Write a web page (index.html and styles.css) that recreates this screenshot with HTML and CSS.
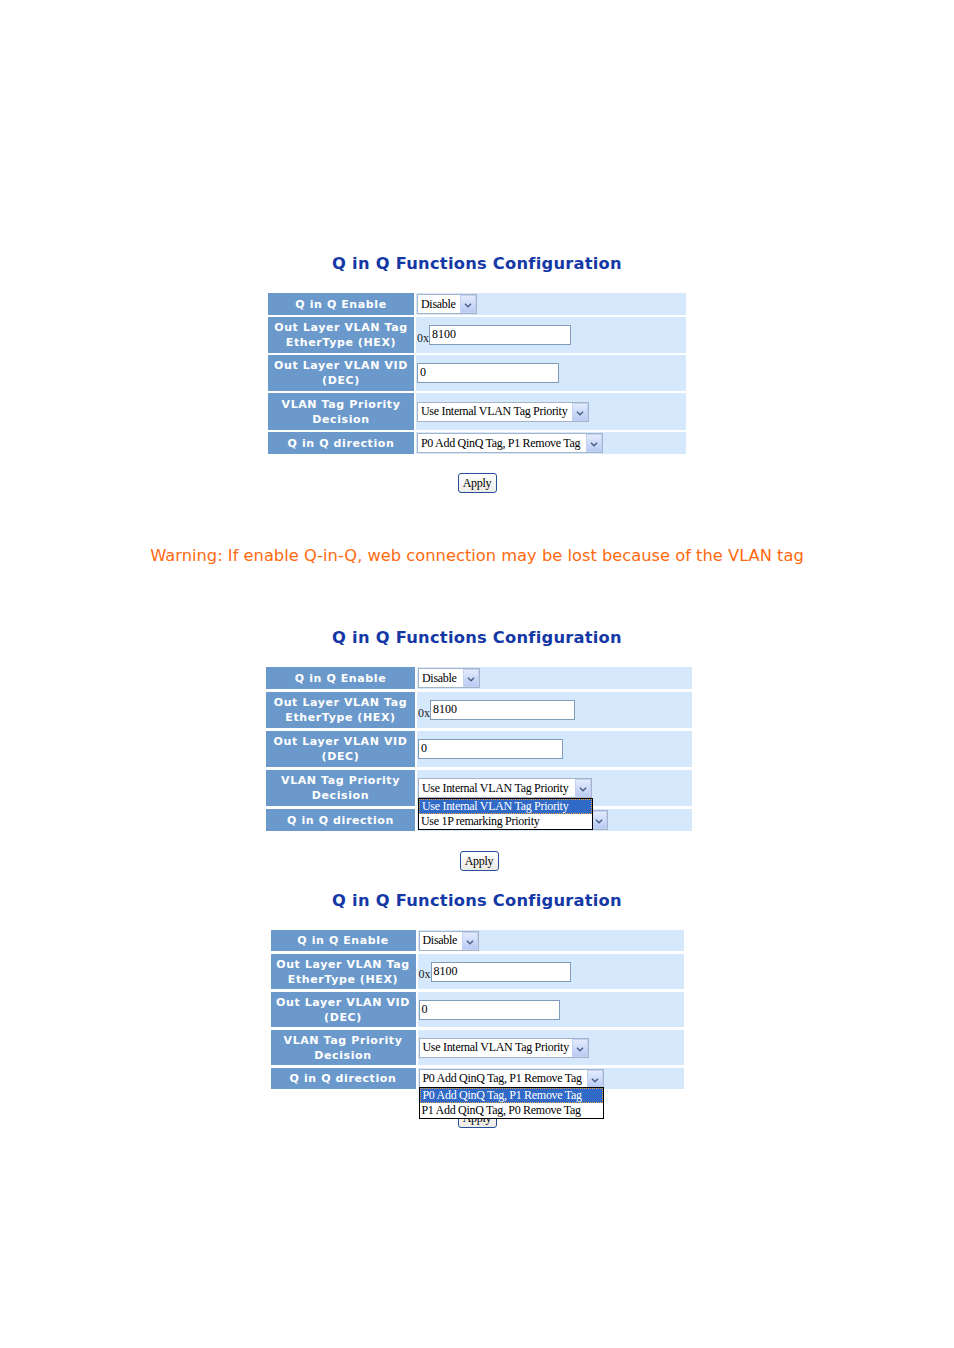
FILE: index.html
```html
<!DOCTYPE html>
<html>
<head>
<meta charset="utf-8">
<link rel="stylesheet" href="styles.css">
</head>
<body>
<div class="page">

  <section class="panel p1">
    <h2 class="title">Q in Q Functions Configuration</h2>
    <div class="grid">
      <div class="lbl r-s">Q in Q Enable</div>
      <div class="val"><div class="sel w-dis"><span class="st">Disable</span><span class="arr"><svg viewBox="0 0 16 18" width="16" height="18"><path d="M4.5 7.5 L8 11 L11.5 7.5" fill="none" stroke="#4a5f86" stroke-width="1.6"/></svg></span></div></div>
      <div class="lbl r-l">Out Layer VLAN Tag<br>EtherType (HEX)</div>
      <div class="val"><span class="pre">0x</span><div class="inp w-hex">8100</div></div>
      <div class="lbl r-l">Out Layer VLAN VID<br>(DEC)</div>
      <div class="val"><div class="inp w-vid">0</div></div>
      <div class="lbl r-l">VLAN Tag Priority<br>Decision</div>
      <div class="val"><div class="sel w-pri"><span class="st">Use Internal VLAN Tag Priority</span><span class="arr"><svg viewBox="0 0 16 18" width="16" height="18"><path d="M4.5 7.5 L8 11 L11.5 7.5" fill="none" stroke="#4a5f86" stroke-width="1.6"/></svg></span></div></div>
      <div class="lbl r-s">Q in Q direction</div>
      <div class="val"><div class="sel w-dir"><span class="st">P0 Add QinQ Tag, P1 Remove Tag</span><span class="arr"><svg viewBox="0 0 16 18" width="16" height="18"><path d="M4.5 7.5 L8 11 L11.5 7.5" fill="none" stroke="#4a5f86" stroke-width="1.6"/></svg></span></div></div>
    </div>
    <button class="apply">Apply</button>
  </section>

  <p class="warning">Warning: If enable Q-in-Q, web connection may be lost because of the VLAN tag</p>

  <section class="panel p2">
    <h2 class="title">Q in Q Functions Configuration</h2>
    <div class="grid">
      <div class="lbl r-s">Q in Q Enable</div>
      <div class="val"><div class="sel w-dis"><span class="st">Disable</span><span class="arr"><svg viewBox="0 0 16 18" width="16" height="18"><path d="M4.5 7.5 L8 11 L11.5 7.5" fill="none" stroke="#4a5f86" stroke-width="1.6"/></svg></span></div></div>
      <div class="lbl r-l">Out Layer VLAN Tag<br>EtherType (HEX)</div>
      <div class="val"><span class="pre">0x</span><div class="inp w-hex">8100</div></div>
      <div class="lbl r-l">Out Layer VLAN VID<br>(DEC)</div>
      <div class="val"><div class="inp w-vid">0</div></div>
      <div class="lbl r-l">VLAN Tag Priority<br>Decision</div>
      <div class="val val-pri"><div class="sel w-pri"><span class="st">Use Internal VLAN Tag Priority</span><span class="arr"><svg viewBox="0 0 16 18" width="16" height="18"><path d="M4.5 7.5 L8 11 L11.5 7.5" fill="none" stroke="#4a5f86" stroke-width="1.6"/></svg></span></div>
        <ul class="drop d-pri">
          <li class="hi">Use Internal VLAN Tag Priority</li>
          <li>Use 1P remarking Priority</li>
        </ul>
      </div>
      <div class="lbl r-s">Q in Q direction</div>
      <div class="val"><div class="sel w-dir"><span class="st covered">P0 Add QinQ Tag, P1 Remove Tag</span><span class="arr"><svg viewBox="0 0 16 18" width="16" height="18"><path d="M4.5 7.5 L8 11 L11.5 7.5" fill="none" stroke="#4a5f86" stroke-width="1.6"/></svg></span></div></div>
    </div>
    <button class="apply">Apply</button>
  </section>

  <section class="panel p3">
    <h2 class="title">Q in Q Functions Configuration</h2>
    <div class="grid">
      <div class="lbl r-s">Q in Q Enable</div>
      <div class="val"><div class="sel w-dis"><span class="st">Disable</span><span class="arr"><svg viewBox="0 0 16 18" width="16" height="18"><path d="M4.5 7.5 L8 11 L11.5 7.5" fill="none" stroke="#4a5f86" stroke-width="1.6"/></svg></span></div></div>
      <div class="lbl r-l">Out Layer VLAN Tag<br>EtherType (HEX)</div>
      <div class="val"><span class="pre">0x</span><div class="inp w-hex">8100</div></div>
      <div class="lbl r-l">Out Layer VLAN VID<br>(DEC)</div>
      <div class="val"><div class="inp w-vid">0</div></div>
      <div class="lbl r-l">VLAN Tag Priority<br>Decision</div>
      <div class="val"><div class="sel w-pri"><span class="st">Use Internal VLAN Tag Priority</span><span class="arr"><svg viewBox="0 0 16 18" width="16" height="18"><path d="M4.5 7.5 L8 11 L11.5 7.5" fill="none" stroke="#4a5f86" stroke-width="1.6"/></svg></span></div></div>
      <div class="lbl r-s">Q in Q direction</div>
      <div class="val val-dir"><div class="sel w-dir"><span class="st">P0 Add QinQ Tag, P1 Remove Tag</span><span class="arr"><svg viewBox="0 0 16 18" width="16" height="18"><path d="M4.5 7.5 L8 11 L11.5 7.5" fill="none" stroke="#4a5f86" stroke-width="1.6"/></svg></span></div>
        <ul class="drop d-dir">
          <li class="hi">P0 Add QinQ Tag, P1 Remove Tag</li>
          <li>P1 Add QinQ Tag, P0 Remove Tag</li>
        </ul>
      </div>
    </div>
    <button class="apply">Apply</button>
  </section>

</div>
</body>
</html>
```

FILE: styles.css
```css
html, body {
  margin: 0;
  padding: 0;
  background: #ffffff;
}

.page {
  width: 954px;
  padding-top: 254px;
  display: flex;
  flex-direction: column;
  align-items: center;
}

.panel {
  display: flex;
  flex-direction: column;
  align-items: center;
}

.title {
  margin: 0;
  height: 20px;
  line-height: 20px;
  font-family: "DejaVu Sans", Verdana, sans-serif;
  font-weight: bold;
  font-size: 16.3px;
  color: #1438a6;
  letter-spacing: 0.25px;
}

.grid {
  margin-top: 19px;
  display: grid;
  column-gap: 2px;
  row-gap: 2px;
}

.p1 .grid {
  grid-template-columns: 146px 270px;
  grid-template-rows: 22px 36px 36px 37px 22px;
}

.p2 .grid {
  grid-template-columns: 149px 275px;
  grid-template-rows: 22px 36px 36px 36px 22px;
  row-gap: 3px;
  margin-left: 4px;
}

.p3 .grid {
  grid-template-columns: 145px 266px;
  grid-template-rows: 21px 35px 35px 35px 21px;
  row-gap: 3px;
}

.lbl {
  background: #6b99cb;
  color: #ffffff;
  font-family: "DejaVu Sans", Verdana, sans-serif;
  font-weight: bold;
  font-size: 11px;
  letter-spacing: 0.6px;
  line-height: 15px;
  text-align: center;
  display: flex;
  align-items: center;
  justify-content: center;
}

.val {
  background: #d6e9fc;
  display: flex;
  align-items: center;
  padding-left: 1px;
  position: relative;
}

.pre {
  font-family: "Liberation Serif", "Times New Roman", serif;
  font-size: 12px;
  color: #222;
  margin-top: 6px;
}

.inp {
  box-sizing: border-box;
  height: 20px;
  background: #fff;
  border: 1px solid #7f9db9;
  font-family: "Liberation Serif", "Times New Roman", serif;
  font-size: 12px;
  line-height: 14px;
  padding: 1px 2px;
  color: #000;
}

.w-hex { width: 142px; }
.w-vid { width: 142px; }
.p2 .w-hex { width: 145px; }
.p2 .w-vid { width: 145px; }
.p3 .w-hex { width: 140px; }
.p3 .w-vid { width: 141px; }

.sel {
  box-sizing: border-box;
  height: 20px;
  background: #fff;
  border: 1px solid #a5b4c8;
  display: flex;
  align-items: center;
  justify-content: space-between;
  font-family: "Liberation Serif", "Times New Roman", serif;
  font-size: 12px;
  color: #000;
}

.st {
  padding-left: 3px;
  white-space: nowrap;
  letter-spacing: -0.3px;
}

.st.covered {
  visibility: hidden;
}

.arr {
  width: 16px;
  height: 18px;
  box-sizing: border-box;
  background: linear-gradient(#e3ebfc, #b9cbf4);
  border: 1px solid #c3d2f3;
  display: flex;
}

.arr svg { display: block; }

.w-dis { width: 60px; }
.w-pri { width: 172px; }
.w-dir { width: 186px; }
.p2 .w-dis { width: 62px; }
.p2 .w-pri { width: 174px; }
.p2 .w-dir { width: 190px; }
.p3 .w-dis { width: 60px; }
.p3 .w-pri { width: 170px; }
.p3 .w-dir { width: 185px; }

.drop {
  position: absolute;
  left: 1px;
  margin: 0;
  padding: 0;
  list-style: none;
  background: #fff;
  border: 1px solid #000;
  font-family: "Liberation Serif", "Times New Roman", serif;
  font-size: 12px;
  z-index: 5;
}

.drop li {
  height: 15px;
  line-height: 15px;
  padding-left: 2px;
  white-space: nowrap;
  letter-spacing: -0.3px;
  box-sizing: border-box;
}

.drop li.hi {
  background: #3169c6;
  color: #fff;
  border: 1px dotted #e8a040;
  line-height: 13px;
}

.d-pri {
  top: 28px;
  width: 175px;
  box-sizing: border-box;
}

.d-dir {
  top: 19px;
  width: 185px;
  box-sizing: border-box;
}

.apply {
  margin-top: 19px;
  width: 39px;
  height: 20px;
  padding: 0;
  background: linear-gradient(#ffffff, #ecebe6);
  border: 1px solid #2a4f9a;
  border-radius: 3px;
  font-family: "Liberation Serif", "Times New Roman", serif;
  font-size: 12px;
  letter-spacing: -0.3px;
  color: #000;
}

.p2 .apply { margin-left: 4px; margin-top: 20px; }

.warning {
  margin: 53px 0 0 0;
  height: 20px;
  line-height: 20px;
  font-family: "DejaVu Sans", Tahoma, sans-serif;
  font-size: 16.3px;
  color: #ff6a10;
  letter-spacing: 0px;
}

.p2 { margin-top: 62px; }
.p3 { margin-top: 20px; }
```
